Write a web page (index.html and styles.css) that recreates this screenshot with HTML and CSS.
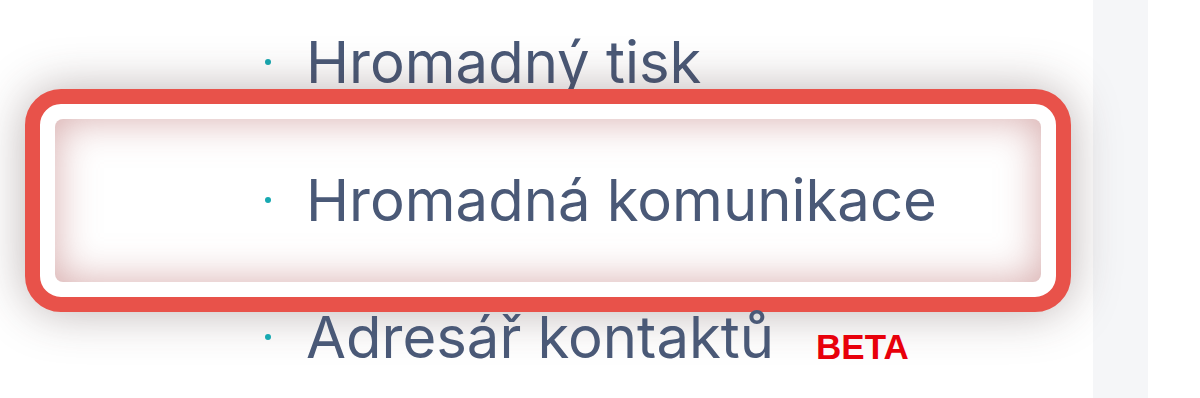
FILE: index.html
```html
<!DOCTYPE html>
<html lang="cs">
<head>
    <meta charset="UTF-8">
    <meta name="viewport" content="width=device-width, initial-scale=1.0">
    <title>Menu</title>
    <link rel="stylesheet" href="styles.css">
</head>
<body>
    <div class="page">
        <div class="menu">
            <div class="item"><span class="dot"></span><span class="label">Hromadný tisk</span></div>
            <div class="frame">
                <div class="frame-inner">
                    <div class="item item-inside"><span class="dot"></span><span class="label">Hromadná komunikace</span></div>
                </div>
            </div>
            <div class="item"><span class="dot"></span><span class="label">Adresář kontaktů</span><span class="beta">BETA</span></div>
        </div>
        <div class="side-strip"></div>
        <div class="rest"></div>
    </div>
</body>
</html>
```
FILE: styles.css
```css
*
{
    box-sizing: border-box;
    margin: 0;
    padding: 0;
}
body
{
    background: #ffffff;
    font-family: Inter, "Noto Sans", sans-serif;
    overflow: hidden;
}
.page
{
    display: flex;
    height: 398px;
    width: 1200px;
}
.menu
{
    width: 1093px;
    display: flex;
    flex-direction: column;
    padding-top: 40px;
    position: relative;
    z-index: 1;
}
.side-strip
{
    width: 55px;
    background: #f5f6f8;
}
.rest
{
    flex: 1;
    background: #ffffff;
}
.item
{
    display: flex;
    align-items: center;
    padding-left: 265px;
    height: 44px;
    line-height: 44px;
}
.dot
{
    width: 6px;
    height: 6px;
    border-radius: 50%;
    background: #17a9b1;
    margin-right: 35px;
    flex-shrink: 0;
}
.label
{
    font-size: 58px;
    color: #4a5977;
    white-space: nowrap;
}
.beta
{
    font-family: "Liberation Sans", Arial, sans-serif;
    font-weight: bold;
    font-size: 35px;
    color: #e8000b;
    margin-left: 42px;
    align-self: flex-end;
    line-height: 38px;
    margin-bottom: -7px;
}
.frame
{
    margin: 5px 0 3px 25px;
    width: 1046px;
    height: 223px;
    border: 15px solid #e8524a;
    border-radius: 36px;
    padding: 15px;
    background: #ffffff;
    box-shadow: 0 0 48px rgba(70, 45, 45, 0.36);
}
.frame-inner
{
    height: 100%;
    border-radius: 8px;
    display: flex;
    align-items: center;
    box-shadow: inset 0 0 40px rgba(180, 100, 100, 0.55);
}
.item-inside
{
    padding-left: 210px;
    margin-top: -2px;
}
```
